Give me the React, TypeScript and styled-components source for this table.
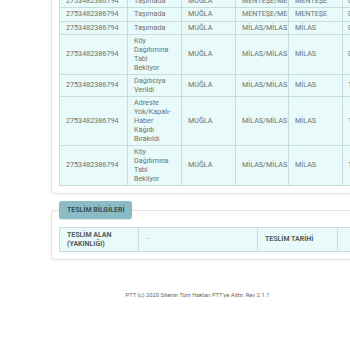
import React from "react";
import styled, { createGlobalStyle } from "styled-components";

const GlobalStyle = createGlobalStyle`
  html, body {
    margin: 0;
    padding: 0;
    background: #fff;
  }
  body {
    font-family: Roboto, "Liberation Sans", sans-serif;
  }
`;

const movements = [
  ["2753482386794", "Taşımada", "MUĞLA", "MENTEŞE/MENTEŞE", "MENTEŞE", "0"],
  ["2753482386794", "Taşımada", "MUĞLA", "MENTEŞE/MENTEŞE", "MENTEŞE", "0"],
  ["2753482386794", "Taşımada", "MUĞLA", "MİLAS/MİLAS", "MİLAS", "0"],
  ["2753482386794", "Köy Dağıtımına Tabi Bekliyor", "MUĞLA", "MİLAS/MİLAS", "MİLAS", "0"],
  ["2753482386794", "Dağıtıcıya Verildi", "MUĞLA", "MİLAS/MİLAS", "MİLAS", "1"],
  ["2753482386794", "Adreste Yok/Kapalı-Haber Kağıdı Bırakıldı", "MUĞLA", "MİLAS/MİLAS", "MİLAS", "1"],
  ["2753482386794", "Köy Dağıtımına Tabi Bekliyor", "MUĞLA", "MİLAS/MİLAS", "MİLAS", "1"],
];

// the page is wider than the window; the last column is cut at the right edge
const moveCols = [68, 54, 54, 53, 54, 9];
const deliveryCols = [79, 119, 80, 14];

const sum = (a: number[]) => a.reduce((s, n) => s + n, 0);

const App = () => {
  return (
    <>
      <GlobalStyle />
      <Viewport>
        <Page>
          <Panel>
            <Table $w={sum(moveCols)}>
              <colgroup>
                {moveCols.map((w, i) => (
                  <Col key={i} $w={w} />
                ))}
              </colgroup>
              <tbody>
                {movements.map((row, r) => (
                  <tr key={r}>
                    {row.map((cell, c) => (
                      <Cell key={c} $last={c === row.length - 1}>
                        {c === 1 ? <Status>{cell}</Status> : cell}
                      </Cell>
                    ))}
                  </tr>
                ))}
              </tbody>
            </Table>
          </Panel>

          <Fieldset>
            <Legend>TESLİM BİLGİLERİ</Legend>
            <Table $w={sum(deliveryCols)}>
              <colgroup>
                {deliveryCols.map((w, i) => (
                  <Col key={i} $w={w} />
                ))}
              </colgroup>
              <tbody>
                <tr>
                  <HeadCell>
                    TESLİM ALAN
                    <br />
                    (YAKINLIĞI)
                  </HeadCell>
                  <InfoCell>-</InfoCell>
                  <HeadCell>TESLİM TARİHİ</HeadCell>
                  <InfoCell></InfoCell>
                </tr>
              </tbody>
            </Table>
          </Fieldset>

          <Footer>PTT (c) 2020 Sitenin Tüm Hakları PTT'ye Aittir. Rev 2.1.1</Footer>
        </Page>
      </Viewport>
    </>
  );
};

export default App;

const Viewport = styled.div`
  width: 350px;
  height: 350px;
  overflow: hidden;
`;

const Page = styled.div`
  width: 350px;
  margin-top: -14px;
  padding-left: 51px;
  box-sizing: border-box;
`;

const Panel = styled.div`
  background: #fff;
  border: 1px solid #dfe5e6;
  border-right: none;
  border-radius: 4px 0 0 4px;
  padding: 7px 0 7px 7px;
  box-shadow: 0 1px 2px rgba(0, 0, 0, 0.05);
`;

const Table = styled.table<{ $w: number }>`
  width: ${(p) => p.$w}px;
  border-collapse: collapse;
  table-layout: fixed;
  background: #e8fafa;
  font-size: 7.2px;
  line-height: 8.87px;
  color: #6d7272;
`;

const Col = styled.col<{ $w: number }>`
  width: ${(p) => p.$w}px;
`;

const Cell = styled.td<{ $last?: boolean }>`
  border: 1px solid #c9dcdc;
  border-right: ${(p) => (p.$last ? "none" : "1px solid #c9dcdc")};
  padding: ${(p) => (p.$last ? "1.75px 0 1.75px 5px" : "1.75px 6px")};
  overflow: hidden;
  white-space: nowrap;
  vertical-align: middle;
`;

const Status = styled.div`
  max-width: 39px;
  white-space: normal;
`;

const HeadCell = styled.td`
  border: 1px solid #c9dcdc;
  padding: 3px 7px;
  font-weight: 700;
  color: #555b5c;
  font-size: 7px;
  line-height: 8.4px;
  white-space: nowrap;
  overflow: hidden;
`;

const InfoCell = styled.td`
  border: 1px solid #c9dcdc;
  padding: 3px 8px;
  color: #8a9090;
`;

const Fieldset = styled.fieldset`
  margin: 7px 0 0;
  padding: 0 0 7px 7px;
  background: #fff;
  border: 1px solid #dfe5e6;
  border-right: none;
  border-radius: 4px 0 0 4px;
  box-shadow: 0 1px 2px rgba(0, 0, 0, 0.05);
  min-width: 0;
  table {
    margin-top: 8px;
  }
`;

const Legend = styled.legend`
  padding: 0 8px;
  height: 18px;
  line-height: 18px;
  background: #8bbcc5;
  color: #31535a;
  font-size: 7px;
  font-weight: 700;
  border-radius: 3px;
  box-shadow: 0 1px 2px rgba(0, 0, 0, 0.12);
`;

const Footer = styled.div`
  width: 293px;
  margin-top: 32px;
  text-align: center;
  font-size: 5.8px;
  color: #666;
`;
